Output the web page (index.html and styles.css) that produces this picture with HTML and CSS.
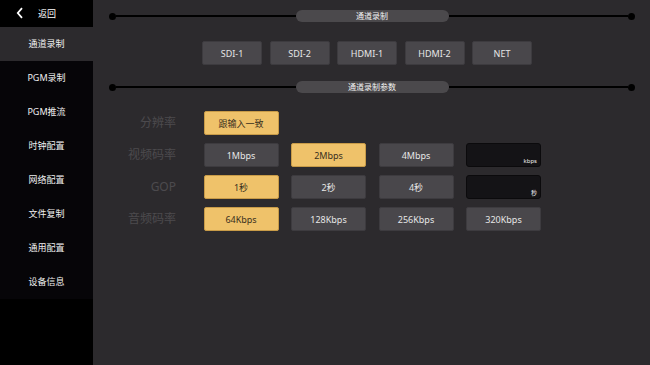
FILE: index.html
```html
<!doctype html>
<html lang="zh">
<head>
  <meta charset="utf-8">
  <title>通道录制</title>
  <link rel="stylesheet" href="styles.css">
</head>
<body>
  <div class="app">
    <nav class="sidebar">
      <div class="back">
        <svg class="back-icon" width="8" height="12" viewBox="0 0 8 12">
          <path d="M6 1.2 L1.8 6 L6 10.8" fill="none" stroke="#fff" stroke-width="1.8"/>
        </svg>
        <span>返回</span>
      </div>
      <ul class="menu">
        <li class="active">通道录制</li>
        <li>PGM录制</li>
        <li>PGM推流</li>
        <li>时钟配置</li>
        <li>网络配置</li>
        <li>文件复制</li>
        <li>通用配置</li>
        <li>设备信息</li>
      </ul>
    </nav>
    <main class="content">
      <div class="divider">
        <span class="dot"></span><span class="line"></span>
        <span class="pill">通道录制</span>
        <span class="line"></span><span class="dot"></span>
      </div>
      <div class="sources">
        <button class="btn">SDI-1</button>
        <button class="btn">SDI-2</button>
        <button class="btn">HDMI-1</button>
        <button class="btn">HDMI-2</button>
        <button class="btn">NET</button>
      </div>
      <div class="divider second">
        <span class="dot"></span><span class="line"></span>
        <span class="pill">通道录制参数</span>
        <span class="line"></span><span class="dot"></span>
      </div>
      <div class="params">
        <div class="label">分辨率</div>
        <button class="btn on">跟输入一致</button>
        <span></span><span></span><span></span>

        <div class="label">视频码率</div>
        <button class="btn">1Mbps</button>
        <button class="btn on">2Mbps</button>
        <button class="btn">4Mbps</button>
        <div class="field"><span>kbps</span></div>

        <div class="label">GOP</div>
        <button class="btn on">1秒</button>
        <button class="btn">2秒</button>
        <button class="btn">4秒</button>
        <div class="field"><span>秒</span></div>

        <div class="label">音频码率</div>
        <button class="btn on">64Kbps</button>
        <button class="btn">128Kbps</button>
        <button class="btn">256Kbps</button>
        <button class="btn">320Kbps</button>
      </div>
    </main>
  </div>
</body>
</html>
```

FILE: styles.css
```css
/* Page layout */
* { box-sizing: border-box; margin: 0; padding: 0; }
body {
  font-family: 'Noto Sans', 'Noto Sans CJK SC', sans-serif;
  background: #2c2a2d;
  color: #e8e8e8;
  width: 650px;
  height: 365px;
  overflow: hidden;
}
.app {
  display: flex;
  height: 365px;
}
/* Sidebar */
.sidebar {
  width: 93px;
  background: #000;
  flex-shrink: 0;
}
.back {
  height: 27px;
  display: flex;
  align-items: center;
  padding-left: 16px;
  font-size: 9px;
  color: #fff;
}
.back-icon {
  margin-right: 14px;
  margin-top: -1px;
}
.menu {
  list-style: none;
  background: #060508;
}
.menu li {
  height: 34px;
  line-height: 34px;
  text-align: center;
  font-size: 9px;
  color: #f0f0f0;
}
.menu li.active {
  background: #2c2a2d;
}
/* Main */
.content {
  flex: 1;
  padding: 10px 15px 0 16px;
}
.divider {
  display: flex;
  align-items: center;
  height: 12px;
}
.divider.second {
  margin-top: 16px;
}
.dot {
  width: 7px;
  height: 7px;
  border-radius: 50%;
  background: #000;
  flex-shrink: 0;
}
.line {
  flex: 1;
  height: 2px;
  background: #000;
}
.pill {
  width: 153px;
  height: 12px;
  line-height: 12px;
  border-radius: 6px;
  background: #4b494c;
  text-align: center;
  font-size: 8px;
  color: #f2f2f2;
}
.btn {
  font-family: inherit;
  font-size: 9px;
  height: 24px;
  border-radius: 2px;
  border: 1px solid #3d3b3f;
  background: #49474b;
  color: #e6e6e6;
}
.btn.on {
  background: #efc26a;
  border-color: #c89b48;
  color: #3a3020;
}
.sources {
  display: flex;
  gap: 7.5px;
  padding-left: 93px;
  margin-top: 19px;
}
.sources .btn {
  width: 60px;
}
/* Parameter grid */
.params {
  display: grid;
  grid-template-columns: 82px repeat(4, 75px);
  column-gap: 12.5px;
  row-gap: 8px;
  grid-auto-rows: 24px;
  margin-top: 18px;
}
.params .label {
  font-size: 12px;
  color: #4c4a4e;
  text-align: right;
  line-height: 24px;
  margin-right: 15px;
}
.field {
  height: 24px;
  background: #141316;
  border: 1px solid #0b0a0c;
  border-radius: 3px;
  display: flex;
  justify-content: flex-end;
  align-items: flex-end;
  padding: 0 3px 1px 0;
  font-size: 6px;
  color: #f0f0f0;
}
```
